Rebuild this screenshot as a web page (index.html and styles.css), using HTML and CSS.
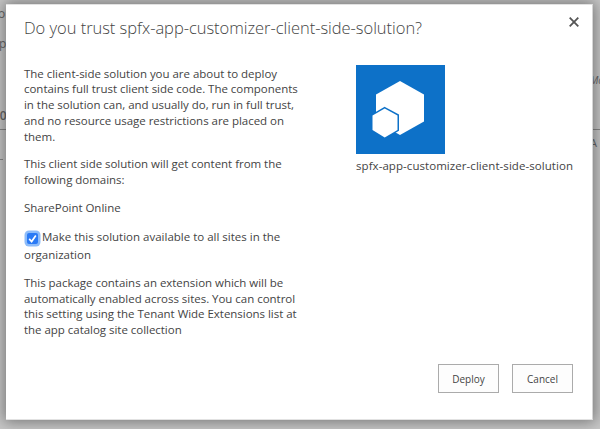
FILE: index.html
```html
<!DOCTYPE html>
<html lang="en">
<head>
<meta charset="utf-8">
<title>Trust solution</title>
<link rel="stylesheet" href="styles.css">
</head>
<body>
<div class="backdrop" aria-hidden="true">
  <span class="bg bg-o">o</span>
  <span class="bg bg-p">p</span>
  <span class="bg bg-num">30</span>
  <span class="bg bg-m">Mo</span>
  <span class="bg bg-a">A</span>
  <i class="rule rule-left"></i>
  <i class="rule rule-right"></i>
  <i class="rule rule-dash"></i>
</div>
<main class="dialog">
  <header class="head">
    <h1 class="title">Do you trust spfx-app-customizer-client-side-solution?</h1>
    <svg class="close" viewBox="0 0 10 10"><path d="M.7.7 9.3 9.3M9.3.7.7 9.3"/></svg>
  </header>
  <div class="body">
    <section class="copy">
      <p>The client-side solution you are about to deploy<br>contains full trust client side code. The components<br>in the solution can, and usually do, run in full trust,<br>and no resource usage restrictions are placed on<br>them.</p>
      <p>This client side solution will get content from the<br>following domains:</p>
      <p>SharePoint Online</p>
      <p class="option"><span class="check"><svg viewBox="0 0 10 10"><path d="M2 5.3 4.2 7.8 8 2.2"/></svg></span>Make this solution available to all sites in the<br>organization</p>
      <p>This package contains an extension which will be<br>automatically enabled across sites. You can control<br>this setting using the Tenant Wide Extensions list at<br>the app catalog site collection</p>
    </section>
    <aside class="app">
      <svg class="logo" viewBox="0 0 89 89">
        <rect width="89" height="89" fill="#0d71c8"/>
        <path d="M44 16 68 29.5V56.500L44 70 20 56.500V29.500Z" fill="#fff"/>
        <path d="M28.700 43.500 41.500 50.500V65L28.700 72.500 16.500 65V50.500Z" fill="#fff" stroke="#0d71c8" stroke-width="3" paint-order="stroke"/>
      </svg>
      <div class="name">spfx-app-customizer-client-side-solution</div>
    </aside>
  </div>
  <footer class="actions">
    <button class="btn">Deploy</button>
    <button class="btn">Cancel</button>
  </footer>
</main>
</body>
</html>
```
FILE: styles.css
```css
* { box-sizing: border-box; }
body {
  margin: 0;
  width: 600px;
  height: 429px;
  overflow: hidden;
  position: relative;
  background: #c8c8c8;
  font-family: "Open Sans", "Noto Sans", sans-serif;
  color: #444;
}
.bg { position: absolute; font-size: 12px; line-height: 14px; color: #666; }
.bg-o { left: -2px; top: 7px; }
.bg-p { left: -1px; top: 37px; }
.bg-num { left: -7px; top: 109px; font-weight: 600; }
.bg-m { left: 590px; top: 73px; font-size: 10px; font-style: italic; }
.bg-a { left: 590px; top: 136px; font-size: 11px; }
.rule { position: absolute; height: 1px; background: #888; }
.rule-left { left: 0; top: 129px; width: 7px; }
.rule-right { left: 592px; top: 129px; width: 8px; }
.rule-dash { left: 0; top: 159px; width: 3px; }
.dialog {
  position: relative;
  margin: 4px 7px 0 6px;
  width: 587px;
  height: 416px;
  padding: 0 19px 0 18px;
  background: #fff;
  border: 1px solid #e2e2e2;
  border-right-color: #d5d5d5;
  border-left-width: 0;
  box-shadow: 0 0 14px 2px rgba(0, 0, 0, .42);
}
.head { display: flex; justify-content: space-between; height: 60px; }
.title {
  margin: 11px 0 0;
  font-size: 16.500px;
  line-height: 24px;
  font-weight: 300;
  letter-spacing: -.035px;
  white-space: nowrap;
}
.close { width: 10px; height: 10px; margin: 12px -6px 0 0; stroke: #555; stroke-width: 1.800; fill: none; }
.body { display: flex; height: 299px; }
.copy { width: 332px; font-size: 11.500px; line-height: 15.800px; padding-top: .5px; letter-spacing: -.03px; white-space: nowrap; }
.copy p { margin: 0 0 12px; }
.copy .option { line-height: 18.500px; margin-bottom: 10px; letter-spacing: 0; }
.check {
  display: inline-flex;
  width: 11px;
  height: 11px;
  margin: 0 4px 0 3px;
  vertical-align: -3px;
  border-radius: 2px;
  background: #2a7af5;
  box-shadow: 0 0 0 2.500px #8dbcf9;
}
.check svg { width: 11px; height: 11px; fill: none; stroke: #fff; stroke-width: 1.500; }
.app { flex: none; }
.logo { display: block; width: 89px; height: 89px; }
.name { margin-top: 4px; font-size: 11.500px; line-height: 16px; letter-spacing: .06px; white-space: nowrap; }
.actions { display: flex; justify-content: flex-end; gap: 13px; }
.copy { flex: none; }
.btn {
  width: 61px;
  height: 29px;
  padding: 0;
  border: 1px solid #ababab;
  background: #fdfdfd;
  color: #444;
  font: 10px/14px "Open Sans", sans-serif;
}
```
